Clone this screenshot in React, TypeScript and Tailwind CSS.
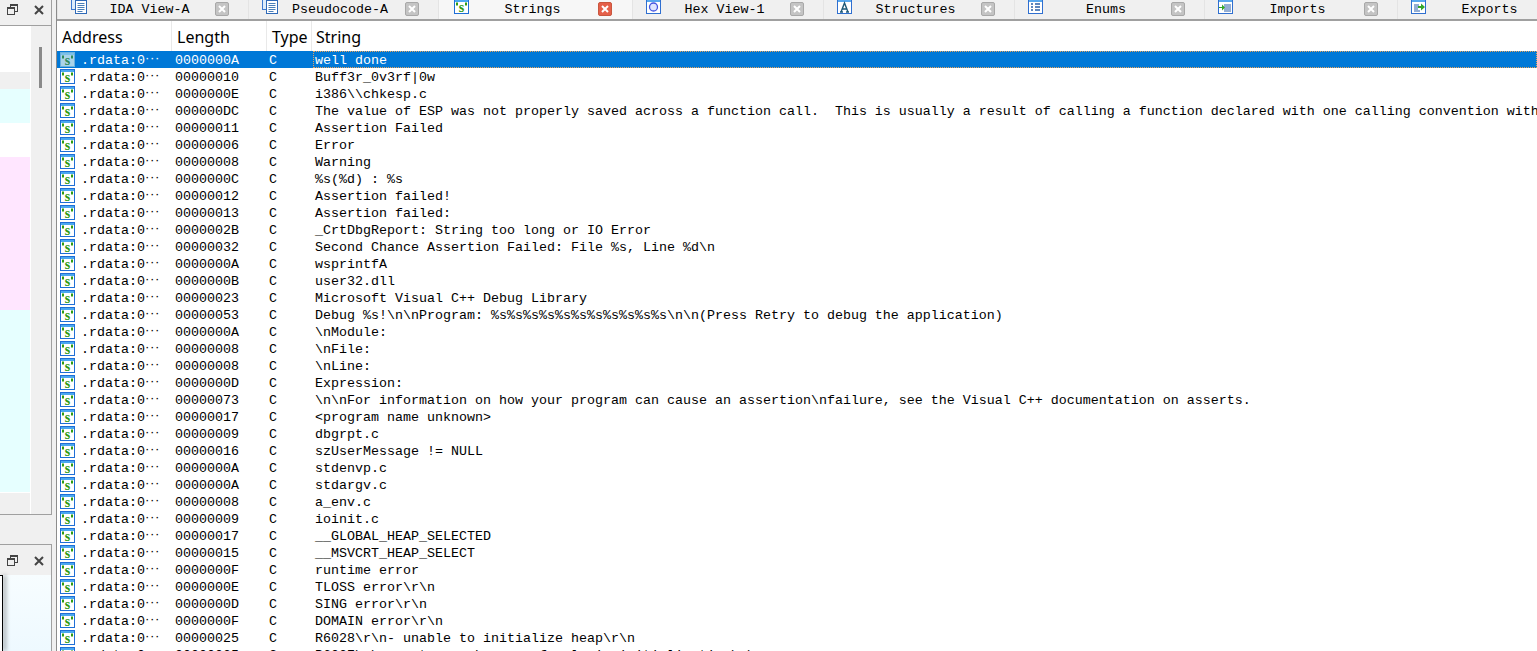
import React from "react";

const mono = "font-['Liberation_Mono',monospace] text-[13.33px]";

const rows: [string, string][] = [
  ["0000000A", "well done"],
  ["00000010", "Buff3r_0v3rf|0w"],
  ["0000000E", "i386\\\\chkesp.c"],
  ["000000DC", "The value of ESP was not properly saved across a function call.  This is usually a result of calling a function declared with one calling convention with a function pointer declared with a different calling convention."],
  ["00000011", "Assertion Failed"],
  ["00000006", "Error"],
  ["00000008", "Warning"],
  ["0000000C", "%s(%d) : %s"],
  ["00000012", "Assertion failed!"],
  ["00000013", "Assertion failed:"],
  ["0000002B", "_CrtDbgReport: String too long or IO Error"],
  ["00000032", "Second Chance Assertion Failed: File %s, Line %d\\n"],
  ["0000000A", "wsprintfA"],
  ["0000000B", "user32.dll"],
  ["00000023", "Microsoft Visual C++ Debug Library"],
  ["00000053", "Debug %s!\\n\\nProgram: %s%s%s%s%s%s%s%s%s%s%s\\n\\n(Press Retry to debug the application)"],
  ["0000000A", "\\nModule:"],
  ["00000008", "\\nFile:"],
  ["00000008", "\\nLine:"],
  ["0000000D", "Expression:"],
  ["00000073", "\\n\\nFor information on how your program can cause an assertion\\nfailure, see the Visual C++ documentation on asserts."],
  ["00000017", "<program name unknown>"],
  ["00000009", "dbgrpt.c"],
  ["00000016", "szUserMessage != NULL"],
  ["0000000A", "stdenvp.c"],
  ["0000000A", "stdargv.c"],
  ["00000008", "a_env.c"],
  ["00000009", "ioinit.c"],
  ["00000017", "__GLOBAL_HEAP_SELECTED"],
  ["00000015", "__MSVCRT_HEAP_SELECT"],
  ["0000000F", "runtime error"],
  ["0000000E", "TLOSS error\\r\\n"],
  ["0000000D", "SING error\\r\\n"],
  ["0000000F", "DOMAIN error\\r\\n"],
  ["00000025", "R6028\\r\\n- unable to initialize heap\\r\\n"],
  ["00000035", "R6027\\r\\n- not enough space for lowio initialization\\r\\n"],
];

function Frame({ children }: { children?: React.ReactNode }) {
  return (
    <>
      <rect x="0.5" y="0.5" width="14" height="14" fill="#fff" stroke="#2f6fd0" />
      <rect x="1" y="1" width="13" height="2" fill="#58a8ee" />
      {children}
    </>
  );
}

function StrIcon({ selected }: { selected?: boolean }) {
  const green = selected ? "#2f8a5a" : "#2e9a12";
  return (
    <svg width="15" height="15" viewBox="0 0 15 15" className="shrink-0">
      <rect x="0.5" y="0.5" width="14" height="14" fill={selected ? "#a9d3e8" : "#fff"} stroke={selected ? "#6bb0dc" : "#1f6fd6"} />
      <rect x="1" y="1" width="13" height="2" fill={selected ? "#7cc0e8" : "#4aa8f0"} />
      <text x="7.5" y="12.5" textAnchor="middle" fontSize="14" fontWeight="700" fontFamily="'Liberation Serif',serif" fill={green}>
        s
      </text>
      <rect x="2" y="3.5" width="2" height="3" fill={green} />
      <rect x="11" y="3.5" width="2" height="3" fill={green} />
    </svg>
  );
}

function DocIcon() {
  return (
    <svg width="16" height="16" viewBox="0 0 16 16">
      <rect x="0.5" y="0.5" width="9" height="11" fill="#dcecfb" stroke="#3b78d0" />
      <rect x="4.5" y="2.5" width="11" height="13" fill="#fff" stroke="#2f6ab8" />
      <path d="M6.5 5.5h7M6.5 7.5h7M6.5 9.5h7M6.5 11.5h7M6.5 13.5h5" stroke="#4a7fb8" strokeWidth="1" />
    </svg>
  );
}

function TabIcon({ kind }: { kind: string }) {
  if (kind === "doc") return <DocIcon />;
  if (kind === "str") return <StrIcon />;
  return (
    <svg width="15" height="15" viewBox="0 0 15 15">
      <Frame>
        {kind === "hex" && <circle cx="7.5" cy="8" r="4" fill="#dfe6ff" stroke="#4656e0" strokeWidth="1.3" />}
        {kind === "struct" && <path d="M4 13L7.5 4L11 13M5.5 10h4M3 13h3M9 13h3" fill="none" stroke="#1f5a78" strokeWidth="1.4" />}
        {kind === "enum" && <path d="M3 5h2M7 5h5M3 8h2M7 8h5M3 11h2M7 11h5" stroke="#2a5fa8" strokeWidth="1.3" />}
        {kind === "imp" && (
          <>
            <path d="M6 6h7M6 8h7M6 10h7M6 12h7" stroke="#2a5fa8" strokeWidth="1" />
            <path d="M1 8h3V5.5L7 8.5L4 11.5V9H1z" fill="#34a828" />
          </>
        )}
        {kind === "exp" && (
          <>
            <path d="M3 6h5M3 8h4M3 10h4M3 12h6" stroke="#2a5fa8" strokeWidth="1" />
            <path d="M7 7h3V4.5L14 8L10 11.5V9H7z" fill="#34a828" />
          </>
        )}
      </Frame>
    </svg>
  );
}

function CloseBtn({ active }: { active?: boolean }) {
  return (
    <div className={`w-[14px] h-[14px] shrink-0 flex items-center justify-center rounded-[2px] border ${active ? "bg-[#e5604a] border-[#c9573f]" : "bg-[#c4c4c4] border-[#a8a8a8]"}`}>
      <svg width="8" height="8" viewBox="0 0 8 8">
        <path d="M1 1L7 7M7 1L1 7" stroke="#fff" strokeWidth="2" />
      </svg>
    </div>
  );
}

const tabs = [
  { label: "IDA View-A", icon: "doc", w: "w-[191px]" },
  { label: "Pseudocode-A", icon: "doc", w: "w-[190px]" },
  { label: "Strings", icon: "str", w: "w-[194px]", active: true },
  { label: "Hex View-1", icon: "hex", w: "w-[191px]" },
  { label: "Structures", icon: "struct", w: "w-[191px]" },
  { label: "Enums", icon: "enum", w: "w-[190px]" },
  { label: "Imports", icon: "imp", w: "w-[193px]" },
  { label: "Exports", icon: "exp", w: "w-[191px]" },
];

function PanelButtons() {
  return (
    <div className="flex items-center gap-[16px] pl-[7px]">
      <svg width="11" height="11" viewBox="0 0 11 11">
        <rect x="3.5" y="0.5" width="7" height="7" fill="none" stroke="#444" />
        <rect x="3" y="0" width="8" height="2" fill="#444" />
        <rect x="0.5" y="3.5" width="7" height="7" fill="#f0f0f0" stroke="#444" />
        <rect x="0" y="3" width="8" height="2" fill="#444" />
      </svg>
      <svg width="10" height="10" viewBox="0 0 10 10">
        <path d="M1 1L9 9M9 1L1 9" stroke="#444" strokeWidth="2" />
      </svg>
    </div>
  );
}

export default function App() {
  return (
    <div className="w-[1537px] h-[651px] overflow-hidden flex bg-white">
      <div className="w-[56px] shrink-0 h-full flex flex-col bg-[#f0f0f0] pr-[4px]">
        <div className="h-[515px] shrink-0 flex flex-col border-r border-b border-[#a0a0a0]">
          <div className="h-[26px] shrink-0 flex items-center border-b border-[#a0a0a0] pb-[6px]">
            <PanelButtons />
          </div>
          <div className="flex-1 flex min-h-0">
            <div className="w-[31px] shrink-0 flex flex-col border-r border-white">
              <div className="h-[46px] bg-white" />
              <div className="h-[17px] bg-[#f0f0f0]" />
              <div className="h-[34px] bg-[#e6ffff]" />
              <div className="h-[34px] bg-white" />
              <div className="h-[153px] bg-[#ffe6ff]" />
              <div className="h-[183px] bg-[#e6ffff] border-b border-white" />
            </div>
            <div className="flex-1 pl-[8px] pt-[21px]">
              <div className="w-[3px] h-[41px] bg-[#8a8a8a]" />
            </div>
          </div>
        </div>
        <div className="h-[29px] shrink-0" />
        <div className="flex-1 flex flex-col border-t border-r border-[#a0a0a0] min-h-0">
          <div className="h-[30px] shrink-0 flex items-center pt-[1px]">
            <PanelButtons />
          </div>
          <div className="flex-1 bg-gradient-to-b from-[#f7fdff] to-[#eef9ff] min-h-0">
            <div className="w-[3px] h-full bg-white border-t border-r-[1.5px] border-black shadow-[3px_0_4px_rgba(0,0,0,0.35)]" />
          </div>
        </div>
      </div>

      <div className="w-px bg-[#8c8c8c] shrink-0" />

      <div className="flex-1 min-w-0 flex flex-col">
        <div className="h-[21px] shrink-0 flex bg-[#f0f0f0] border-b-2 border-[#a0a0a0] overflow-hidden">
          {tabs.map((t) => (
            <div
              key={t.label}
              className={`${t.w} shrink-0 h-[19px] flex items-start border-l border-[#e4e4e4] ${t.active ? "bg-[#f7f7f7] pl-[15px] pr-[20px]" : "pl-[13px] pr-[19px]"} ${mono} text-black`}
            >
              <div className="w-[16px] h-[14px] shrink-0 overflow-hidden flex items-end">
                <TabIcon kind={t.icon} />
              </div>
              <div className="flex-1 text-center whitespace-pre leading-[19px] pr-[3px]">{t.label}</div>
              <div className="pt-[2px]">
                <CloseBtn active={t.active} />
              </div>
            </div>
          ))}
        </div>

        <div className="h-[30px] shrink-0 flex items-center bg-white font-['Noto_Sans',sans-serif] text-[16px] text-black">
          <div className="w-[115px] h-full pl-[5px] pt-[1px] flex items-center border-r border-[#e9e9e9] shrink-0">Address</div>
          <div className="w-[95px] h-full pl-[5px] pt-[1px] flex items-center border-r border-[#e9e9e9] shrink-0">Length</div>
          <div className="w-[45px] h-full pl-[5px] pt-[1px] flex items-center border-r border-[#e9e9e9] shrink-0">Type</div>
          <div className="flex-1 h-full pl-[4px] pt-[1px] flex items-center">String</div>
        </div>

        <div className={`flex-1 min-h-0 overflow-hidden ${mono} text-black`}>
          {rows.map(([len, str], i) => {
            const sel = i === 0;
            return (
              <div key={i} className={`h-[17px] flex items-start leading-[19px] whitespace-pre ${sel ? "bg-[#0078d7] text-white" : ""}`}>
                <div className="w-[114px] h-[17px] shrink-0 flex items-center pl-[3px]">
                  <StrIcon selected={sel} />
                  <span className="ml-[6px] pt-[2px]">.rdata:0</span>
                  <span className="font-['Liberation_Sans',sans-serif] tracking-[0.5px] -mt-[4px]">···</span>
                </div>
                <div className="w-[95px] h-[17px] shrink-0 pl-[4px]">{len}</div>
                <div className="w-[45px] h-[17px] shrink-0 pl-[3px]">C</div>
                <div className={`flex-1 min-w-0 h-[17px] ml-[2px] pl-[2px] overflow-hidden ${sel ? "outline-1 outline-dotted outline-[#e8a25a] -outline-offset-1" : ""}`}>{str}</div>
              </div>
            );
          })}
        </div>
      </div>
    </div>
  );
}
